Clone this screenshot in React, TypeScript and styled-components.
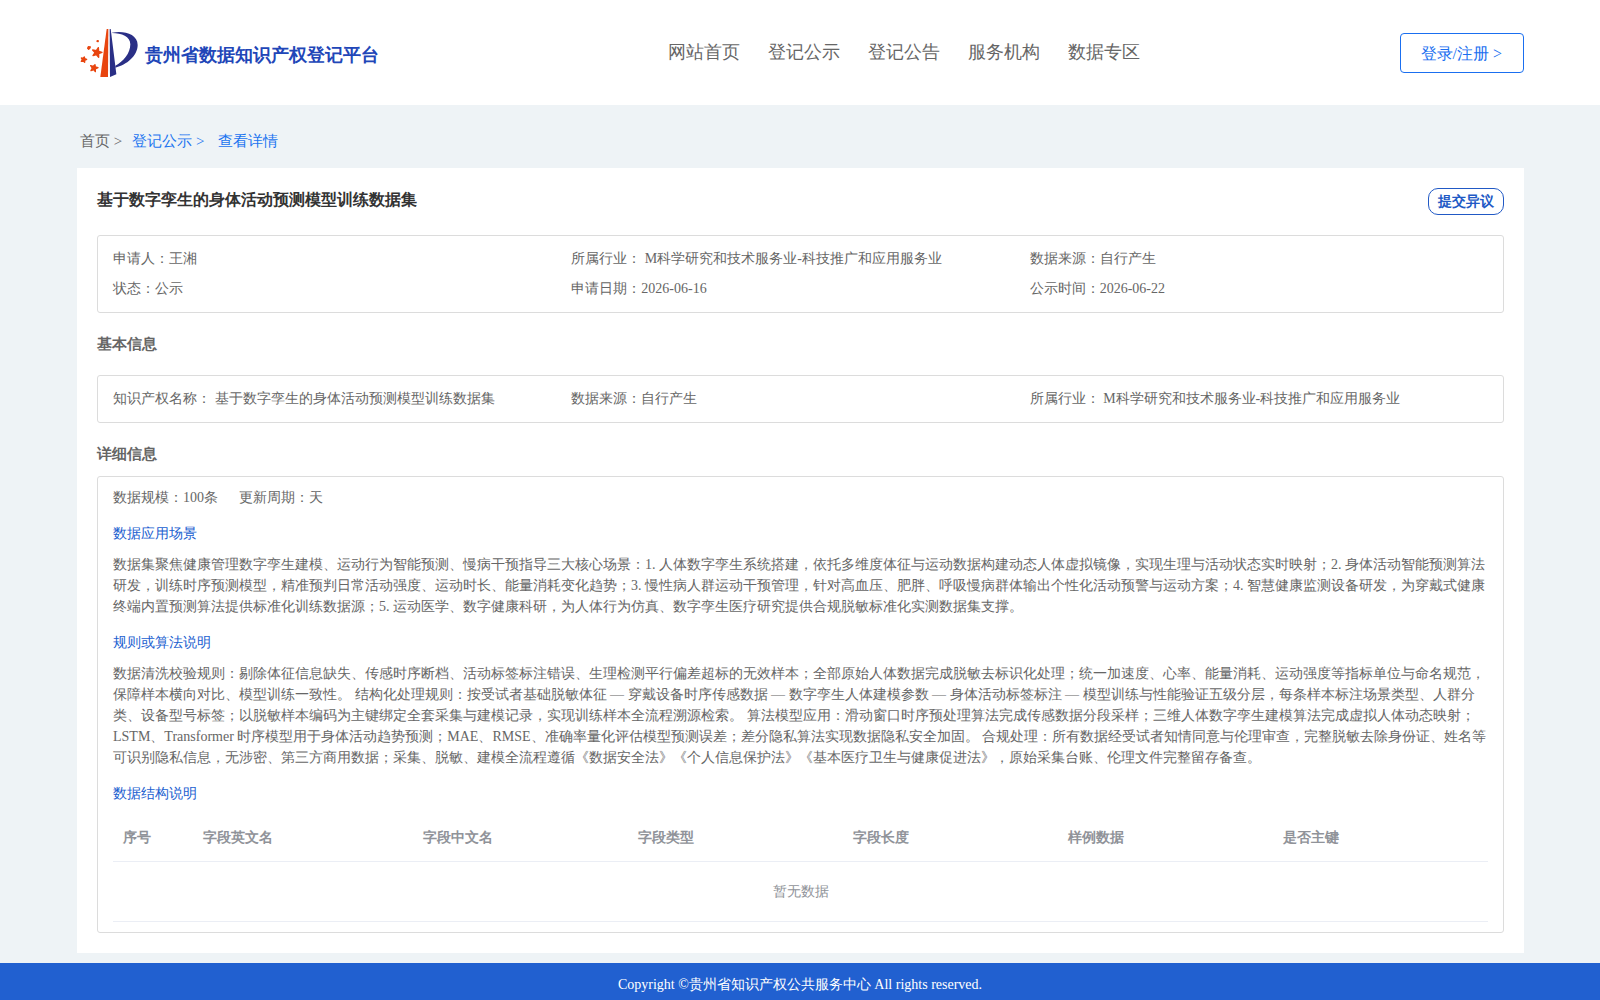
import React from "react";
import styled, { createGlobalStyle } from "styled-components";

const GlobalStyle = createGlobalStyle`
  * { box-sizing: border-box; }
  body {
    margin: 0;
    background: #eef3f6;
    color: #666;
    font-family: "Liberation Serif", serif;
    font-size: 14px;
    line-height: 21px;
  }
  h1, h2, h3, p, ul, ol, dl, dd { margin: 0; padding: 0; }
  ul, ol { list-style: none; }
  a { color: inherit; text-decoration: none; }
  button { font-family: inherit; cursor: pointer; }
`;

const Page = styled.div`
  display: flex;
  flex-direction: column;
  min-height: 100vh;
`;

const Header = styled.header`
  display: flex;
  align-items: center;
  justify-content: space-between;
  height: 105px;
  padding: 0 76px 0 77px;
  background: #fff;
`;

const Brand = styled.a`
  display: flex;
  align-items: center;
  gap: 7px;
  padding: 0 29px 0 3px;
`;

const BrandName = styled.span`
  padding-top: 4px;
  color: #2146b8;
  font-size: 18px;
  font-weight: bold;
  line-height: 24px;
`;

const Nav = styled.nav`
  display: flex;
  gap: 28px;
  padding-bottom: 2px;
  font-size: 18px;
  line-height: 24px;
`;

const LoginButton = styled.button`
  height: 40px;
  padding: 3px 21px 0 20px;
  border: 1px solid #1a6ff0;
  border-radius: 4px;
  background: #fff;
  color: #1a6ff0;
  font-size: 16px;
`;

const Breadcrumb = styled.ol`
  display: flex;
  gap: 10px;
  padding: 25px 80px 16px;
  font-size: 15px;
  line-height: 22px;
`;

const Crumb = styled.li<{ $active?: boolean }>`
  color: ${(p) => (p.$active ? "#1a73f0" : "#666")};
  white-space: pre;
`;

const Panel = styled.main`
  margin: 0 76px 0 77px;
  padding: 20px;
  background: #fff;
`;

const TitleBar = styled.div`
  display: flex;
  align-items: flex-start;
  justify-content: space-between;
  margin-bottom: 20px;
`;

const Title = styled.h1`
  color: #333;
  font-size: 16px;
  line-height: 24px;
`;

const ObjectionButton = styled.button`
  height: 27px;
  padding: 0 9px;
  border: 1px solid #2159c5;
  border-radius: 10px;
  background: #fff;
  color: #2159c5;
  font-size: 14px;
  font-weight: bold;
`;

const Box = styled.div`
  border: 1px solid #dcdcdc;
  border-radius: 3px;
  padding: 8px 15px;
`;

const FieldGrid = styled(Box)`
  display: grid;
  grid-template-columns: repeat(3, 1fr);
  line-height: 30px;
`;

const SectionTitle = styled.h2<{ $gap: number }>`
  padding: 20px 0 ${(p) => p.$gap}px;
  font-size: 15px;
  line-height: 22px;
`;

const DetailBox = styled(Box)`
  padding: 10px 15px;
`;

const Scale = styled.p`
  display: flex;
  gap: 21px;
`;

const SubTitle = styled.h3`
  margin: 15px 0 10px;
  color: #2160d0;
  font-size: 14px;
  font-weight: normal;
`;

const Table = styled.table`
  width: 100%;
  table-layout: fixed;
  border-collapse: separate;
  border-spacing: 0;
  color: #909399;
`;

const Th = styled.th<{ $width?: string }>`
  width: ${(p) => p.$width ?? "auto"};
  height: 48px;
  padding: 0 10px;
  border-bottom: 1px solid #ebeef5;
  text-align: left;
`;

const EmptyCell = styled.td`
  height: 60px;
  padding: 0;
  border-bottom: 1px solid #ebeef5;
  text-align: center;
`;

const Footer = styled.footer`
  flex: 1;
  margin-top: 10px;
  padding: 11px 0 4px;
  background: #2160d0;
  color: #fff;
  line-height: 22px;
  text-align: center;
`;

const BrandMark = () => (
  <svg width="58" height="50" viewBox="30 39 174 150" aria-hidden="true">
    <path fill="#e8450f" d="M110 42h5l-1 144H91z" />
    <path fill="#2a2f86" d="M119 42h3l17 136-19 8z" />
    <path
      fill="#2a2f86"
      d="M126 53C160 46 203 56 203 90C203 122 170 150 136 158V152C160 140 181 115 181 88C181 64 155 54 126 54Z"
    />
    <g fill="#e8450f" stroke="#e8450f" strokeWidth="4" strokeLinejoin="round">
      <path d="M85 98L86 109L96 112L86 116L86 127L79 119L69 122L75 113L68 105L79 107z" />
      <path d="M43 126L44 131L50 133L44 136L44 142L40 138L34 139L37 134L34 129L39 130z" />
      <path d="M75 149L76 156L84 158L76 162L76 170L71 164L63 167L67 159L62 152L70 154z" />
      <path d="M55 95l6 1-2 4-3 3-3-3z" />
      <path d="M82 77l3 1-1 2-3-1z" />
    </g>
  </svg>
);

const navItems = ["网站首页", "登记公示", "登记公告", "服务机构", "数据专区"];

const summary = [
  "申请人：王湘",
  "所属行业： M科学研究和技术服务业-科技推广和应用服务业",
  "数据来源：自行产生",
  "状态：公示",
  "申请日期：2026-06-16",
  "公示时间：2026-06-22",
];

const basics = [
  "知识产权名称： 基于数字孪生的身体活动预测模型训练数据集",
  "数据来源：自行产生",
  "所属行业： M科学研究和技术服务业-科技推广和应用服务业",
];

const columns = [
  { name: "序号", width: "80px" },
  { name: "字段英文名", width: "16%" },
  { name: "字段中文名" },
  { name: "字段类型" },
  { name: "字段长度" },
  { name: "样例数据" },
  { name: "是否主键" },
];

export default function App() {
  return (
    <Page>
      <GlobalStyle />
      <Header>
        <Brand href="#">
          <BrandMark />
          <BrandName>贵州省数据知识产权登记平台</BrandName>
        </Brand>
        <Nav>
          {navItems.map((item) => (
            <a href="#" key={item}>{item}</a>
          ))}
        </Nav>
        <LoginButton type="button">登录/注册 &gt;</LoginButton>
      </Header>

      <Breadcrumb>
        <Crumb><a href="#">首页</a> &gt;</Crumb>
        <Crumb $active><a href="#">登记公示</a>{" > "}</Crumb>
        <Crumb $active><a href="#">查看详情</a></Crumb>
      </Breadcrumb>

      <Panel>
        <TitleBar>
          <Title>基于数字孪生的身体活动预测模型训练数据集</Title>
          <ObjectionButton type="button">提交异议</ObjectionButton>
        </TitleBar>
        <FieldGrid>
          {summary.map((text) => <div key={text}>{text}</div>)}
        </FieldGrid>

        <SectionTitle $gap={20}>基本信息</SectionTitle>
        <FieldGrid>
          {basics.map((text) => <div key={text}>{text}</div>)}
        </FieldGrid>

        <SectionTitle $gap={11}>详细信息</SectionTitle>
        <DetailBox>
          <Scale><span>数据规模：100条</span><span>更新周期：天</span></Scale>

          <SubTitle>数据应用场景</SubTitle>
          <p>
            数据集聚焦健康管理数字孪生建模、运动行为智能预测、慢病干预指导三大核心场景：1. 人体数字孪生系统搭建，依托多维度体征与运动数据构建动态人体虚拟镜像，实现生理与活动状态实时映射；2. 身体活动智能预测算法研发，训练时序预测模型，精准预判日常活动强度、运动时长、能量消耗变化趋势；3. 慢性病人群运动干预管理，针对高血压、肥胖、呼吸慢病群体输出个性化活动预警与运动方案；4. 智慧健康监测设备研发，为穿戴式健康终端内置预测算法提供标准化训练数据源；5. 运动医学、数字健康科研，为人体行为仿真、数字孪生医疗研究提供合规脱敏标准化实测数据集支撑。
          </p>

          <SubTitle>规则或算法说明</SubTitle>
          <p>
            数据清洗校验规则：剔除体征信息缺失、传感时序断档、活动标签标注错误、生理检测平行偏差超标的无效样本；全部原始人体数据完成脱敏去标识化处理；统一加速度、心率、能量消耗、运动强度等指标单位与命名规范，保障样本横向对比、模型训练一致性。 结构化处理规则：按受试者基础脱敏体征 — 穿戴设备时序传感数据 — 数字孪生人体建模参数 — 身体活动标签标注 — 模型训练与性能验证五级分层，每条样本标注场景类型、人群分类、设备型号标签；以脱敏样本编码为主键绑定全套采集与建模记录，实现训练样本全流程溯源检索。 算法模型应用：滑动窗口时序预处理算法完成传感数据分段采样；三维人体数字孪生建模算法完成虚拟人体动态映射；LSTM、Transformer 时序模型用于身体活动趋势预测；MAE、RMSE、准确率量化评估模型预测误差；差分隐私算法实现数据隐私安全加固。 合规处理：所有数据经受试者知情同意与伦理审查，完整脱敏去除身份证、姓名等可识别隐私信息，无涉密、第三方商用数据；采集、脱敏、建模全流程遵循《数据安全法》《个人信息保护法》《基本医疗卫生与健康促进法》，原始采集台账、伦理文件完整留存备查。
          </p>

          <SubTitle>数据结构说明</SubTitle>
          <Table>
            <thead>
              <tr>
                {columns.map((c) => <Th key={c.name} scope="col" $width={c.width}>{c.name}</Th>)}
              </tr>
            </thead>
            <tbody>
              <tr><EmptyCell colSpan={7}>暂无数据</EmptyCell></tr>
            </tbody>
          </Table>
        </DetailBox>
      </Panel>

      <Footer>Copyright ©贵州省知识产权公共服务中心 All rights reserved.</Footer>
    </Page>
  );
}
